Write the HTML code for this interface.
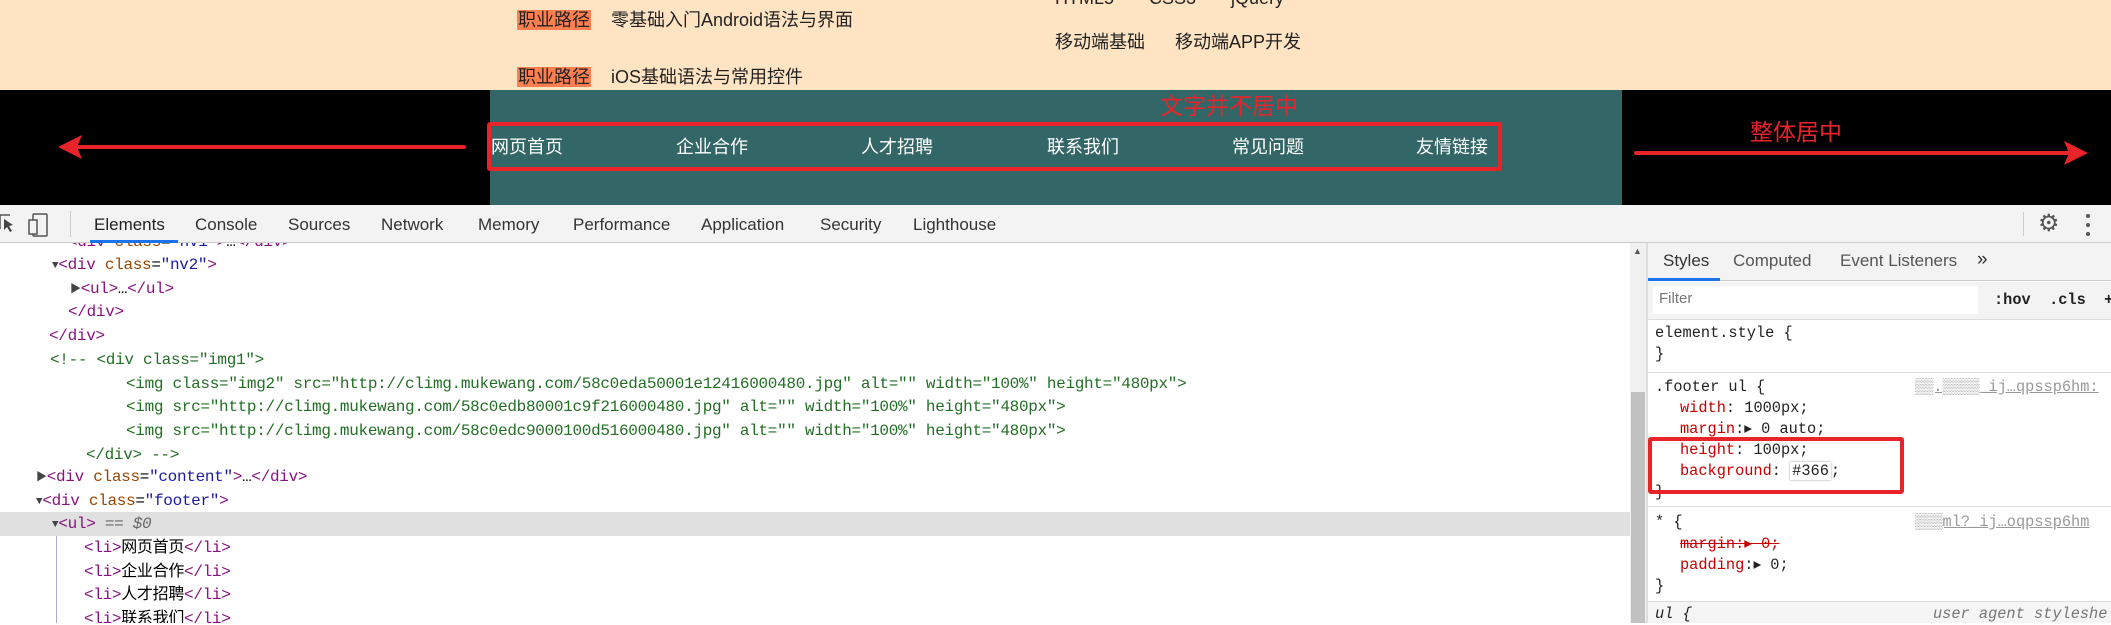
<!DOCTYPE html>
<html><head><meta charset="utf-8"><style>
*{margin:0;padding:0;box-sizing:border-box}
body{width:2111px;height:623px;overflow:hidden;position:relative;background:#fff;font-family:"Liberation Sans","Noto Sans CJK SC",sans-serif}
.a{position:absolute;white-space:nowrap}
.cn{font-size:18px;color:#222;line-height:24px}
.tag{background:#ff7f50;color:#222;padding:0 1px}
.nav{font-size:18px;color:#fff;line-height:24px;top:135px}
.red{color:#e8232a;font-size:23px;line-height:28px}
.tab{font-size:17px;color:#333;top:213px;line-height:24px}
.dom{position:absolute;left:0;top:243px;width:1630px;height:380px;overflow:hidden;font-family:"Liberation Mono","Noto Sans CJK SC",monospace;font-size:16px;letter-spacing:-0.3px}
.r{position:absolute;left:0;width:1630px;height:24px;line-height:24px;white-space:nowrap}
.t{color:#881280}.n{color:#994500}.v{color:#1a1aa6}.c{color:#236e25}.k{color:#444;font-size:11px;vertical-align:1px}
.st{font-family:"Liberation Mono",monospace;font-size:15.3px;line-height:21px;color:#222}
.p{color:#c80000}
</style></head><body>
<div class="a" style="left:0;top:0;width:2111px;height:90px;background:#ffe4c4"></div>
<div class="a cn" style="left:1055px;top:-14px">HTML5&nbsp;&nbsp;&nbsp;&nbsp;&nbsp;&nbsp;&nbsp;CSS3&nbsp;&nbsp;&nbsp;&nbsp;&nbsp;&nbsp;&nbsp;jQuery</div>
<div class="a cn" style="left:517px;top:8px"><span class="tag">职业路径</span>&nbsp;&nbsp;&nbsp;&nbsp;零基础入门Android语法与界面</div>
<div class="a cn" style="left:1055px;top:30px">移动端基础&nbsp;&nbsp;&nbsp;&nbsp;&nbsp;&nbsp;移动端APP开发</div>
<div class="a cn" style="left:517px;top:65px"><span class="tag">职业路径</span>&nbsp;&nbsp;&nbsp;&nbsp;iOS基础语法与常用控件</div>
<div class="a" style="left:0;top:90px;width:2111px;height:115px;background:#000"></div>
<div class="a" style="left:490px;top:90px;width:1132px;height:115px;background:#336666"></div>
<div class="a nav" style="left:491px">网页首页</div>
<div class="a nav" style="left:676px">企业合作</div>
<div class="a nav" style="left:861px">人才招聘</div>
<div class="a nav" style="left:1047px">联系我们</div>
<div class="a nav" style="left:1232px">常见问题</div>
<div class="a nav" style="left:1416px">友情链接</div>
<div class="a" style="left:487px;top:122px;width:1015px;height:49px;border:4px solid #e8232a;border-radius:3px"></div>
<div class="a red" style="left:1160px;top:92px">文字并不居中</div>
<div class="a red" style="left:1750px;top:118px">整体居中</div>
<svg class="a" style="left:0;top:90px" width="2111" height="115">
<line x1="464" y1="57" x2="75" y2="57" stroke="#e8232a" stroke-width="4" stroke-linecap="round"/>
<polygon points="58,57 82,45 77,57 82,69" fill="#e8232a"/>
<line x1="1636" y1="63" x2="2070" y2="63" stroke="#e8232a" stroke-width="4" stroke-linecap="round"/>
<polygon points="2088,63 2064,51 2069,63 2064,75" fill="#e8232a"/>
</svg>
<div class="a" style="left:0;top:205px;width:2111px;height:38px;background:#f3f3f3;border-bottom:1px solid #ccc"></div>
<svg class="a" style="left:0;top:210px" width="70" height="30">
<path d="M0 5 h10 M0 5 v14" stroke="#555" stroke-width="1.5" fill="none"/>
<path d="M4 9 l9 6 -4 1 3 5 -2 1 -3 -5 -3 3z" fill="#444"/>
<rect x="33" y="4" width="14" height="22" rx="1" stroke="#555" stroke-width="1.5" fill="none"/>
<rect x="29" y="10" width="8" height="14" stroke="#555" stroke-width="1.5" fill="#f3f3f3"/>
</svg>
<div class="a" style="left:70px;top:211px;width:1px;height:26px;background:#ccc"></div>
<div class="a tab" style="left:94px;color:#222">Elements</div>
<div class="a" style="left:90px;top:240px;width:88px;height:3px;background:#1a73e8"></div>
<div class="a tab" style="left:195px">Console</div>
<div class="a tab" style="left:288px">Sources</div>
<div class="a tab" style="left:381px">Network</div>
<div class="a tab" style="left:478px">Memory</div>
<div class="a tab" style="left:573px">Performance</div>
<div class="a tab" style="left:701px">Application</div>
<div class="a tab" style="left:820px">Security</div>
<div class="a tab" style="left:913px">Lighthouse</div>
<div class="a" style="left:2023px;top:212px;width:1px;height:24px;background:#ccc"></div>
<div class="a" style="left:2038px;top:209px;font-size:24px;color:#555;line-height:30px">⚙</div>
<svg class="a" style="left:2084px;top:213px" width="8" height="24"><circle cx="4" cy="3" r="2" fill="#555"/><circle cx="4" cy="12" r="2" fill="#555"/><circle cx="4" cy="21" r="2" fill="#555"/></svg>
<div class="dom">
<div class="r" style="top:-13px;padding-left:68px"><span class="t">&lt;div</span> <span class="n">class</span>=<span class="v">"nv1"</span><span class="t">&gt;</span>…<span class="t">&lt;/div&gt;</span></div>
<div class="r" style="top:10px;padding-left:52px"><span class="k">▼</span><span class="t">&lt;div</span> <span class="n">class</span>=<span class="v">"nv2"</span><span class="t">&gt;</span></div>
<div class="r" style="top:34px;padding-left:70px"><span class="k">▶</span><span class="t">&lt;ul&gt;</span>…<span class="t">&lt;/ul&gt;</span></div>
<div class="r" style="top:57px;padding-left:68px"><span class="t">&lt;/div&gt;</span></div>
<div class="r" style="top:81px;padding-left:49px"><span class="t">&lt;/div&gt;</span></div>
<div class="r c" style="top:105px;padding-left:50px">&lt;!-- &lt;div class="img1"&gt;</div>
<div class="r c" style="top:129px;padding-left:126px">&lt;img class="img2" src="http://climg.mukewang.com/58c0eda50001e12416000480.jpg" alt="" width="100%" height="480px"&gt;</div>
<div class="r c" style="top:152px;padding-left:126px">&lt;img src="http://climg.mukewang.com/58c0edb80001c9f216000480.jpg" alt="" width="100%" height="480px"&gt;</div>
<div class="r c" style="top:176px;padding-left:126px">&lt;img src="http://climg.mukewang.com/58c0edc9000100d516000480.jpg" alt="" width="100%" height="480px"&gt;</div>
<div class="r c" style="top:200px;padding-left:86px">&lt;/div&gt; --&gt;</div>
<div class="r" style="top:222px;padding-left:36px"><span class="k">▶</span><span class="t">&lt;div</span> <span class="n">class</span>=<span class="v">"content"</span><span class="t">&gt;</span>…<span class="t">&lt;/div&gt;</span></div>
<div class="r" style="top:246px;padding-left:36px"><span class="k">▼</span><span class="t">&lt;div</span> <span class="n">class</span>=<span class="v">"footer"</span><span class="t">&gt;</span></div>
<div class="r" style="top:269px;padding-left:52px;background:#e0e0e0"><span class="k">▼</span><span class="t">&lt;ul&gt;</span> <span style="color:#666">== <i>$0</i></span></div>
<div class="a" style="left:56px;top:293px;width:1px;height:90px;background:#aac"></div>
<div class="r" style="top:293px;padding-left:84px"><span class="t">&lt;li&gt;</span>网页首页<span class="t">&lt;/li&gt;</span></div>
<div class="r" style="top:317px;padding-left:84px"><span class="t">&lt;li&gt;</span>企业合作<span class="t">&lt;/li&gt;</span></div>
<div class="r" style="top:340px;padding-left:84px"><span class="t">&lt;li&gt;</span>人才招聘<span class="t">&lt;/li&gt;</span></div>
<div class="r" style="top:364px;padding-left:84px"><span class="t">&lt;li&gt;</span>联系我们<span class="t">&lt;/li&gt;</span></div>
</div>
<div class="a" style="left:1630px;top:243px;width:16px;height:380px;background:#f1f1f1"></div>
<div class="a" style="left:1631px;top:392px;width:14px;height:231px;background:#c1c1c1"></div>
<div class="a" style="left:1633px;top:246px;font-size:9px;color:#555">▲</div>
<div class="a" style="left:1646px;top:243px;width:2px;height:380px;background:#ddd"></div>
<div class="a" style="left:1648px;top:243px;width:463px;height:380px;background:#fff"></div>
<div class="a" style="left:1648px;top:243px;width:463px;height:38px;background:#f3f3f3;border-bottom:1px solid #ccc"></div>
<div class="a" style="left:1663px;top:251px;font-size:17px;color:#333">Styles</div>
<div class="a" style="left:1733px;top:251px;font-size:17px;color:#555">Computed</div>
<div class="a" style="left:1840px;top:251px;font-size:17px;color:#555">Event Listeners</div>
<div class="a" style="left:1977px;top:249px;font-size:19px;color:#333">»</div>
<div class="a" style="left:1648px;top:278px;width:72px;height:3px;background:#1a73e8"></div>
<div class="a" style="left:1648px;top:282px;width:463px;height:38px;background:#f3f3f3;border-bottom:1px solid #ddd"></div>
<div class="a" style="left:1653px;top:286px;width:325px;height:28px;background:#fff"></div>
<div class="a" style="left:1659px;top:290px;font-size:15px;color:#777">Filter</div>
<div class="a st" style="left:1994px;top:290px;font-weight:bold">:hov&nbsp;&nbsp;.cls&nbsp;&nbsp;+</div>
<div class="a st" style="left:1655px;top:323px">element.style {<br>}</div>
<div class="a" style="left:1648px;top:372px;width:463px;height:1px;background:#ddd"></div>
<div class="a st" style="left:1655px;top:377px">.footer ul {</div>
<div class="a st" style="left:1680px;top:398px"><span class="p">width</span>: 1000px;<br><span class="p">margin</span>:▸ 0 auto;<br><span class="p">height</span>: 100px;<br><span class="p">background</span>: <span style="background:#fff;box-shadow:0 0 2px #999;padding:0 2px">#366</span>;</div>
<div class="a st" style="left:1655px;top:482px">}</div>
<div class="a st" style="left:1915px;top:377px;color:#999;text-decoration:underline">▒▒.▒▒▒▒_ij…qpssp6hm:</div>
<div class="a" style="left:1648px;top:437px;width:256px;height:57px;border:4px solid #e8232a;border-radius:3px"></div>
<div class="a" style="left:1648px;top:506px;width:463px;height:1px;background:#ddd"></div>
<div class="a st" style="left:1655px;top:512px">* {</div>
<div class="a st" style="left:1680px;top:534px"><span class="p" style="text-decoration:line-through">margin:▸ 0;</span><br><span class="p">padding</span>:▸ 0;</div>
<div class="a st" style="left:1655px;top:576px">}</div>
<div class="a st" style="left:1915px;top:512px;color:#999;text-decoration:underline">▒▒▒ml?_ij…oqpssp6hm</div>
<div class="a" style="left:1648px;top:601px;width:463px;height:22px;background:#f5f5f5;border-top:1px solid #ddd"></div>
<div class="a st" style="left:1655px;top:604px;font-style:italic">ul {</div>
<div class="a st" style="left:1933px;top:604px;font-style:italic;color:#777">user agent styleshe</div>
</body></html>
